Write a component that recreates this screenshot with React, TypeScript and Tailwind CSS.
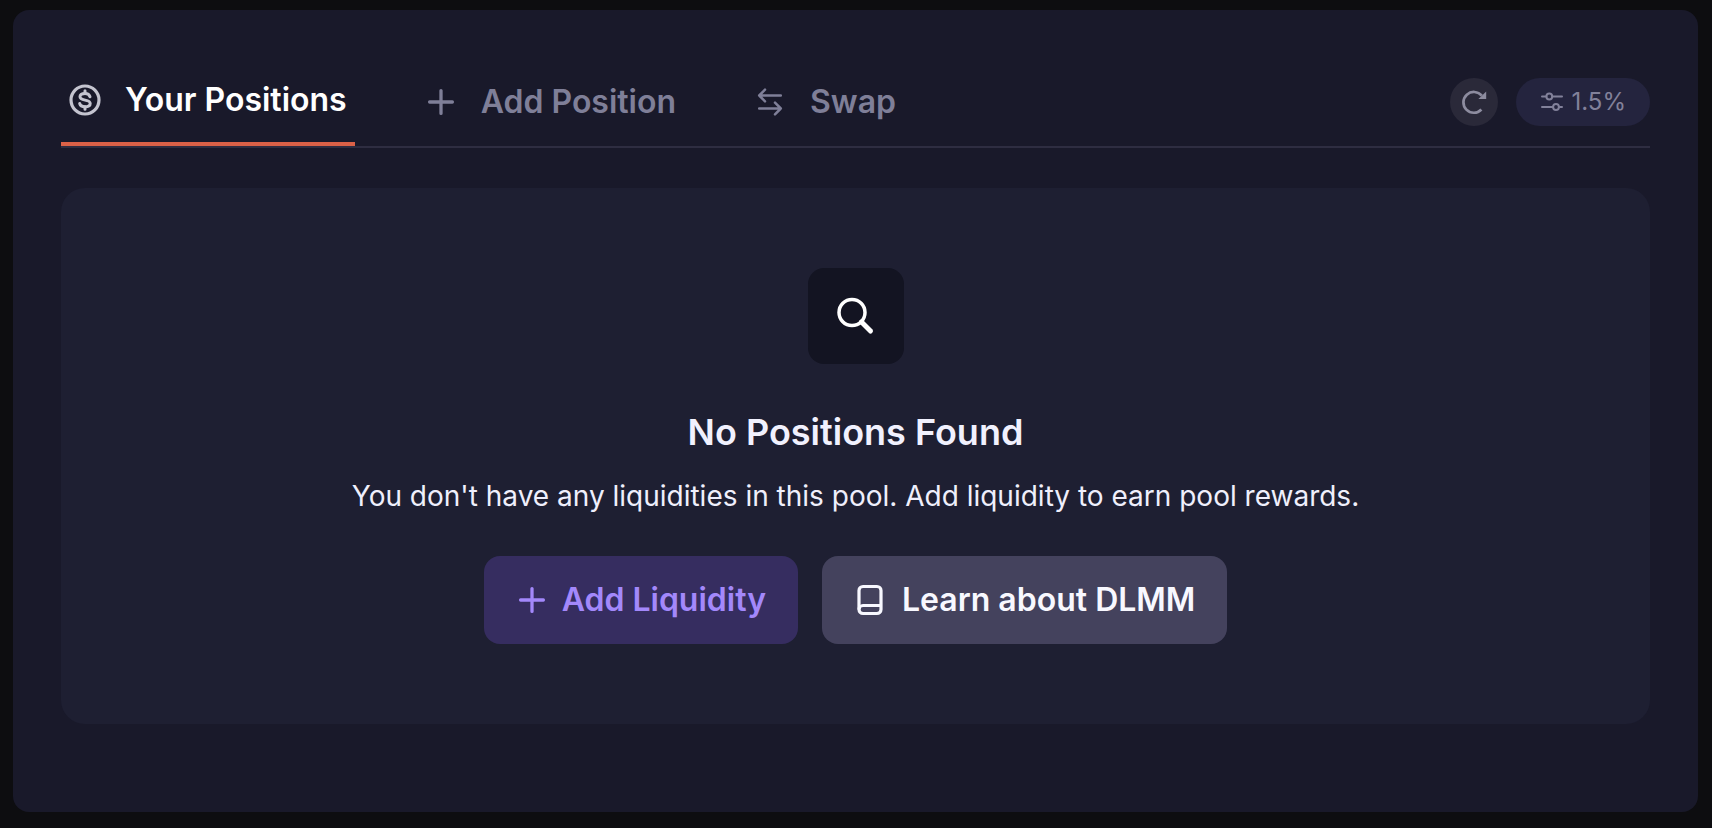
import React from "react";

type IconProps = { className?: string };

const DollarIcon = ({ className }: IconProps) => (
  <svg viewBox="0 0 32 32" fill="none" stroke="currentColor" strokeLinecap="round" strokeLinejoin="round" className={className} aria-hidden="true">
    <circle cx="16" cy="16" r="14" strokeWidth="3.2" />
    <path d="M16 6.800v2.500M16 22.700v2.500" strokeWidth="3" />
    <path d="M21 12.700c-.6-2-2.500-3.200-5-3.200-2.900 0-5 1.300-5 3.300 0 4.500 10.200 2.200 10.200 6.600 0 2-2.200 3.300-5.200 3.300-2.800 0-4.800-1.300-5.300-3.200" strokeWidth="3" />
  </svg>
);

const PlusIcon = ({ className }: IconProps) => (
  <svg viewBox="0 0 32 32" fill="none" stroke="currentColor" strokeWidth="3.3" strokeLinecap="round" className={className} aria-hidden="true">
    <path d="M16 4.600v22.800M4.600 16h22.800" />
  </svg>
);

const SwapIcon = ({ className }: IconProps) => (
  <svg viewBox="0 0 32 32" fill="none" stroke="currentColor" strokeWidth="2.500" strokeLinecap="round" strokeLinejoin="round" className={className} aria-hidden="true">
    <path d="M26.800 9.500H5.200M11 3.700 5.200 9.500l5.800 5.800M5.200 22.500h21.600M21 16.700l5.800 5.800-5.800 5.800" />
  </svg>
);

const RefreshIcon = ({ className }: IconProps) => (
  <svg viewBox="0 0 28 28" fill="none" className={className} aria-hidden="true">
    <path d="M21.800 7.700A10.400 10.400 0 1 0 21.400 21.500" stroke="currentColor" strokeWidth="2.700" />
    <path d="M26.200 3.600v7.300h-7.800z" fill="currentColor" />
  </svg>
);

const SlidersIcon = ({ className }: IconProps) => (
  <svg viewBox="0 0 24 24" fill="none" stroke="currentColor" strokeWidth="2" strokeLinecap="round" className={className} aria-hidden="true">
    <path d="M2 6.500h4.300M12.300 6.500H22M2 17h11M19 17h3" />
    <circle cx="9.300" cy="6.500" r="2.900" />
    <circle cx="16" cy="17" r="2.900" />
  </svg>
);

const SearchIcon = ({ className }: IconProps) => (
  <svg viewBox="0 0 40 40" fill="none" stroke="currentColor" strokeLinecap="round" className={className} aria-hidden="true">
    <circle cx="16" cy="16.500" r="13" strokeWidth="3.500" />
    <path d="M25.500 26l9 9" strokeWidth="5" />
  </svg>
);

const BookIcon = ({ className }: IconProps) => (
  <svg viewBox="0 0 32 32" fill="none" stroke="currentColor" strokeWidth="3.2" strokeLinejoin="round" className={className} aria-hidden="true">
    <rect x="5" y="2.500" width="22" height="27" rx="4" />
    <path d="M5 25.500c0-2.500 1.800-4 4-4h18" />
  </svg>
);

const tabs = [
  { label: "Your Positions", Icon: DollarIcon, active: true },
  { label: "Add Position", Icon: PlusIcon, active: false },
  { label: "Swap", Icon: SwapIcon, active: false },
];

export default function App() {
  return (
    <div className="min-h-screen bg-[#0d0d10] pt-[10px] pr-[14px] pb-4 pl-[13px] font-['Inter',sans-serif]">
      <main className="flex min-h-[calc(100vh-26px)] flex-col rounded-2xl bg-[#19192a] px-12 pt-12 pb-[88px]">
        <header className="flex items-stretch justify-between border-b-2 border-[#2e2d41]">
          <nav className="flex gap-[62px]" role="tablist" aria-label="Pool">
            {tabs.map(({ label, Icon, active }) => (
              <button
                key={label}
                type="button"
                role="tab"
                aria-selected={active}
                className={
                  active
                    ? "flex h-[88px] items-center gap-6 border-b-4 border-[#db6147] px-2 text-[32px] leading-10 font-semibold text-white"
                    : "flex h-[88px] items-center gap-6 px-2 text-[32px] leading-10 font-semibold text-[#7f7f98]"
                }
              >
                <Icon className={active ? "size-8 text-[#c4c4cf]" : "size-8"} />
                {label}
              </button>
            ))}
          </nav>
          <div className="flex items-center gap-[18px]">
            <button type="button" aria-label="Refresh" className="flex size-12 items-center justify-center rounded-full bg-[#2a2939] text-[#8d8c9f]">
              <RefreshIcon className="size-7" />
            </button>
            <button type="button" aria-label="Slippage 1.5%" className="flex h-12 items-center gap-2 rounded-full bg-[#24243e] px-6 text-2xl text-[#82819a]">
              <SlidersIcon className="size-6" />
              1.5%
            </button>
          </div>
        </header>

        <section className="mt-10 flex flex-1 flex-col items-center justify-center rounded-3xl bg-[#1e1f32] py-20 text-center">
          <div className="flex size-24 items-center justify-center rounded-2xl bg-[#131422] text-white">
            <SearchIcon className="size-10" />
          </div>
          <h1 className="mt-11 text-4xl leading-[48px] font-semibold text-[#f1f1fe]">No Positions Found</h1>
          <p className="mt-5 text-[28px] leading-10 text-[#efeffc]">
            You don't have any liquidities in this pool. Add liquidity to earn pool rewards.
          </p>
          <div className="mt-10 flex gap-6">
            <button type="button" className="flex h-[88px] items-center gap-3.5 rounded-2xl bg-[#362d60] px-8 text-[32px] font-semibold text-[#a388fb]">
              <PlusIcon className="size-8" />
              Add Liquidity
            </button>
            <button type="button" className="flex h-[88px] items-center gap-4 rounded-2xl bg-[#44425d] px-8 text-[32px] font-semibold text-[#f8f8ff]">
              <BookIcon className="size-8" />
              Learn about DLMM
            </button>
          </div>
        </section>
      </main>
    </div>
  );
}
